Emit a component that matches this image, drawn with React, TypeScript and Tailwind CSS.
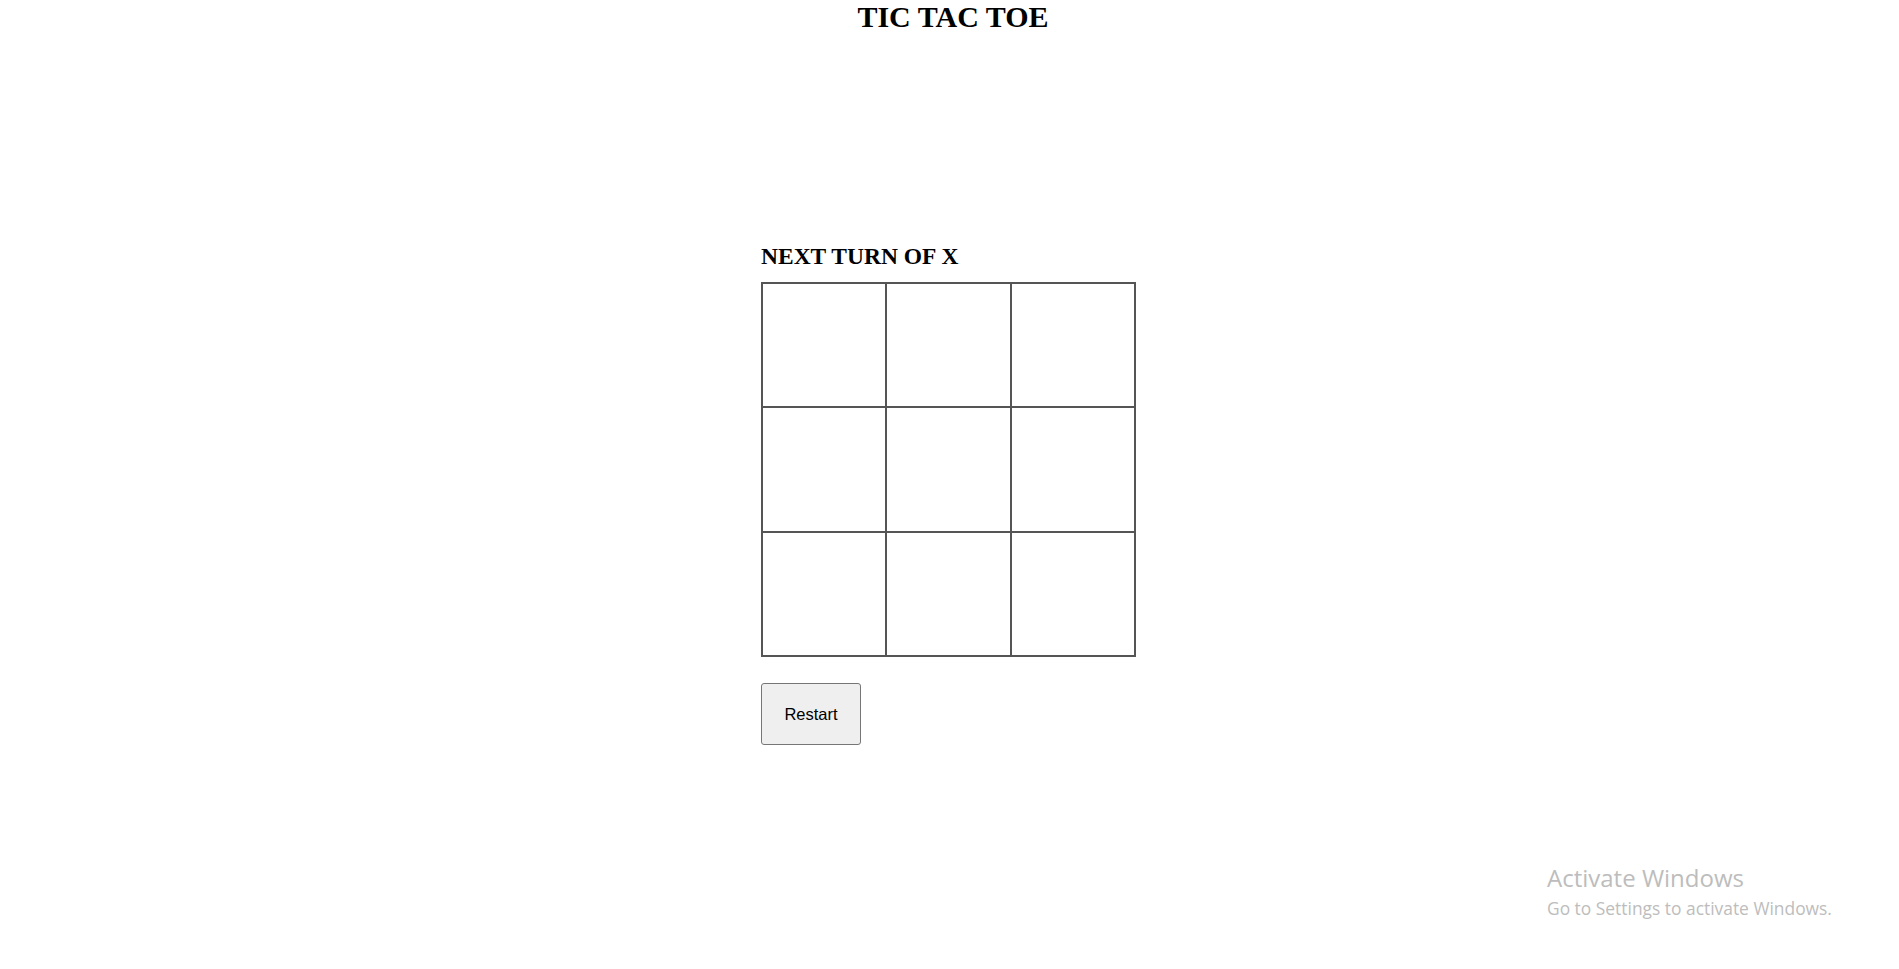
import { useState } from 'react'

type Mark = 'X' | 'O' | null

const LINES = [
  [0, 1, 2],
  [3, 4, 5],
  [6, 7, 8],
  [0, 3, 6],
  [1, 4, 7],
  [2, 5, 8],
  [0, 4, 8],
  [2, 4, 6],
]

function findWinner(board: Mark[]): Mark {
  for (const [a, b, c] of LINES) {
    if (board[a] && board[a] === board[b] && board[a] === board[c]) return board[a]
  }
  return null
}

export default function App() {
  const [board, setBoard] = useState<Mark[]>(Array(9).fill(null))
  const [xNext, setXNext] = useState(true)

  const winner = findWinner(board)
  const status = winner ? `WINNER IS ${winner}` : `NEXT TURN OF ${xNext ? 'X' : 'O'}`

  function play(index: number) {
    if (board[index] || winner) return
    const next = board.slice()
    next[index] = xNext ? 'X' : 'O'
    setBoard(next)
    setXNext(!xNext)
  }

  function restart() {
    setBoard(Array(9).fill(null))
    setXNext(true)
  }

  return (
    <div className="relative min-h-[969px] bg-white text-black">
      <h1 className="m-0 pl-[7px] text-center font-['Liberation_Serif',serif] text-[30px] font-bold leading-[34px]">
        TIC TAC TOE
      </h1>

      <div className="mx-auto mt-[210px] w-[377px]">
        <h3 className="font-['Liberation_Serif',serif] text-[23.5px] font-bold leading-[24px]">{status}</h3>
        <div className="mt-[14px] grid w-[375px] grid-cols-3 border border-[#555]">
          {board.map((mark, index) => (
            <button
              key={index}
              type="button"
              onClick={() => play(index)}
              className="h-[124.33px] border border-[#555] bg-white font-['Liberation_Sans',sans-serif] text-[48px] font-bold"
            >
              {mark}
            </button>
          ))}
        </div>
        <button
          type="button"
          onClick={restart}
          className="mt-[26px] h-[62px] w-[100px] rounded-[3px] border border-[#767676] bg-[#efefef] font-['Liberation_Sans',sans-serif] text-[16.5px] text-black"
        >
          Restart
        </button>
      </div>

      <div className="pointer-events-none absolute left-[1547px] top-[864px] font-['Open_Sans',sans-serif] text-[#bdbdbd]">
        <div className="text-[24px] leading-[28px]">Activate Windows</div>
        <div className="text-[17.4px] leading-[32px]">Go to Settings to activate Windows.</div>
      </div>
    </div>
  )
}
